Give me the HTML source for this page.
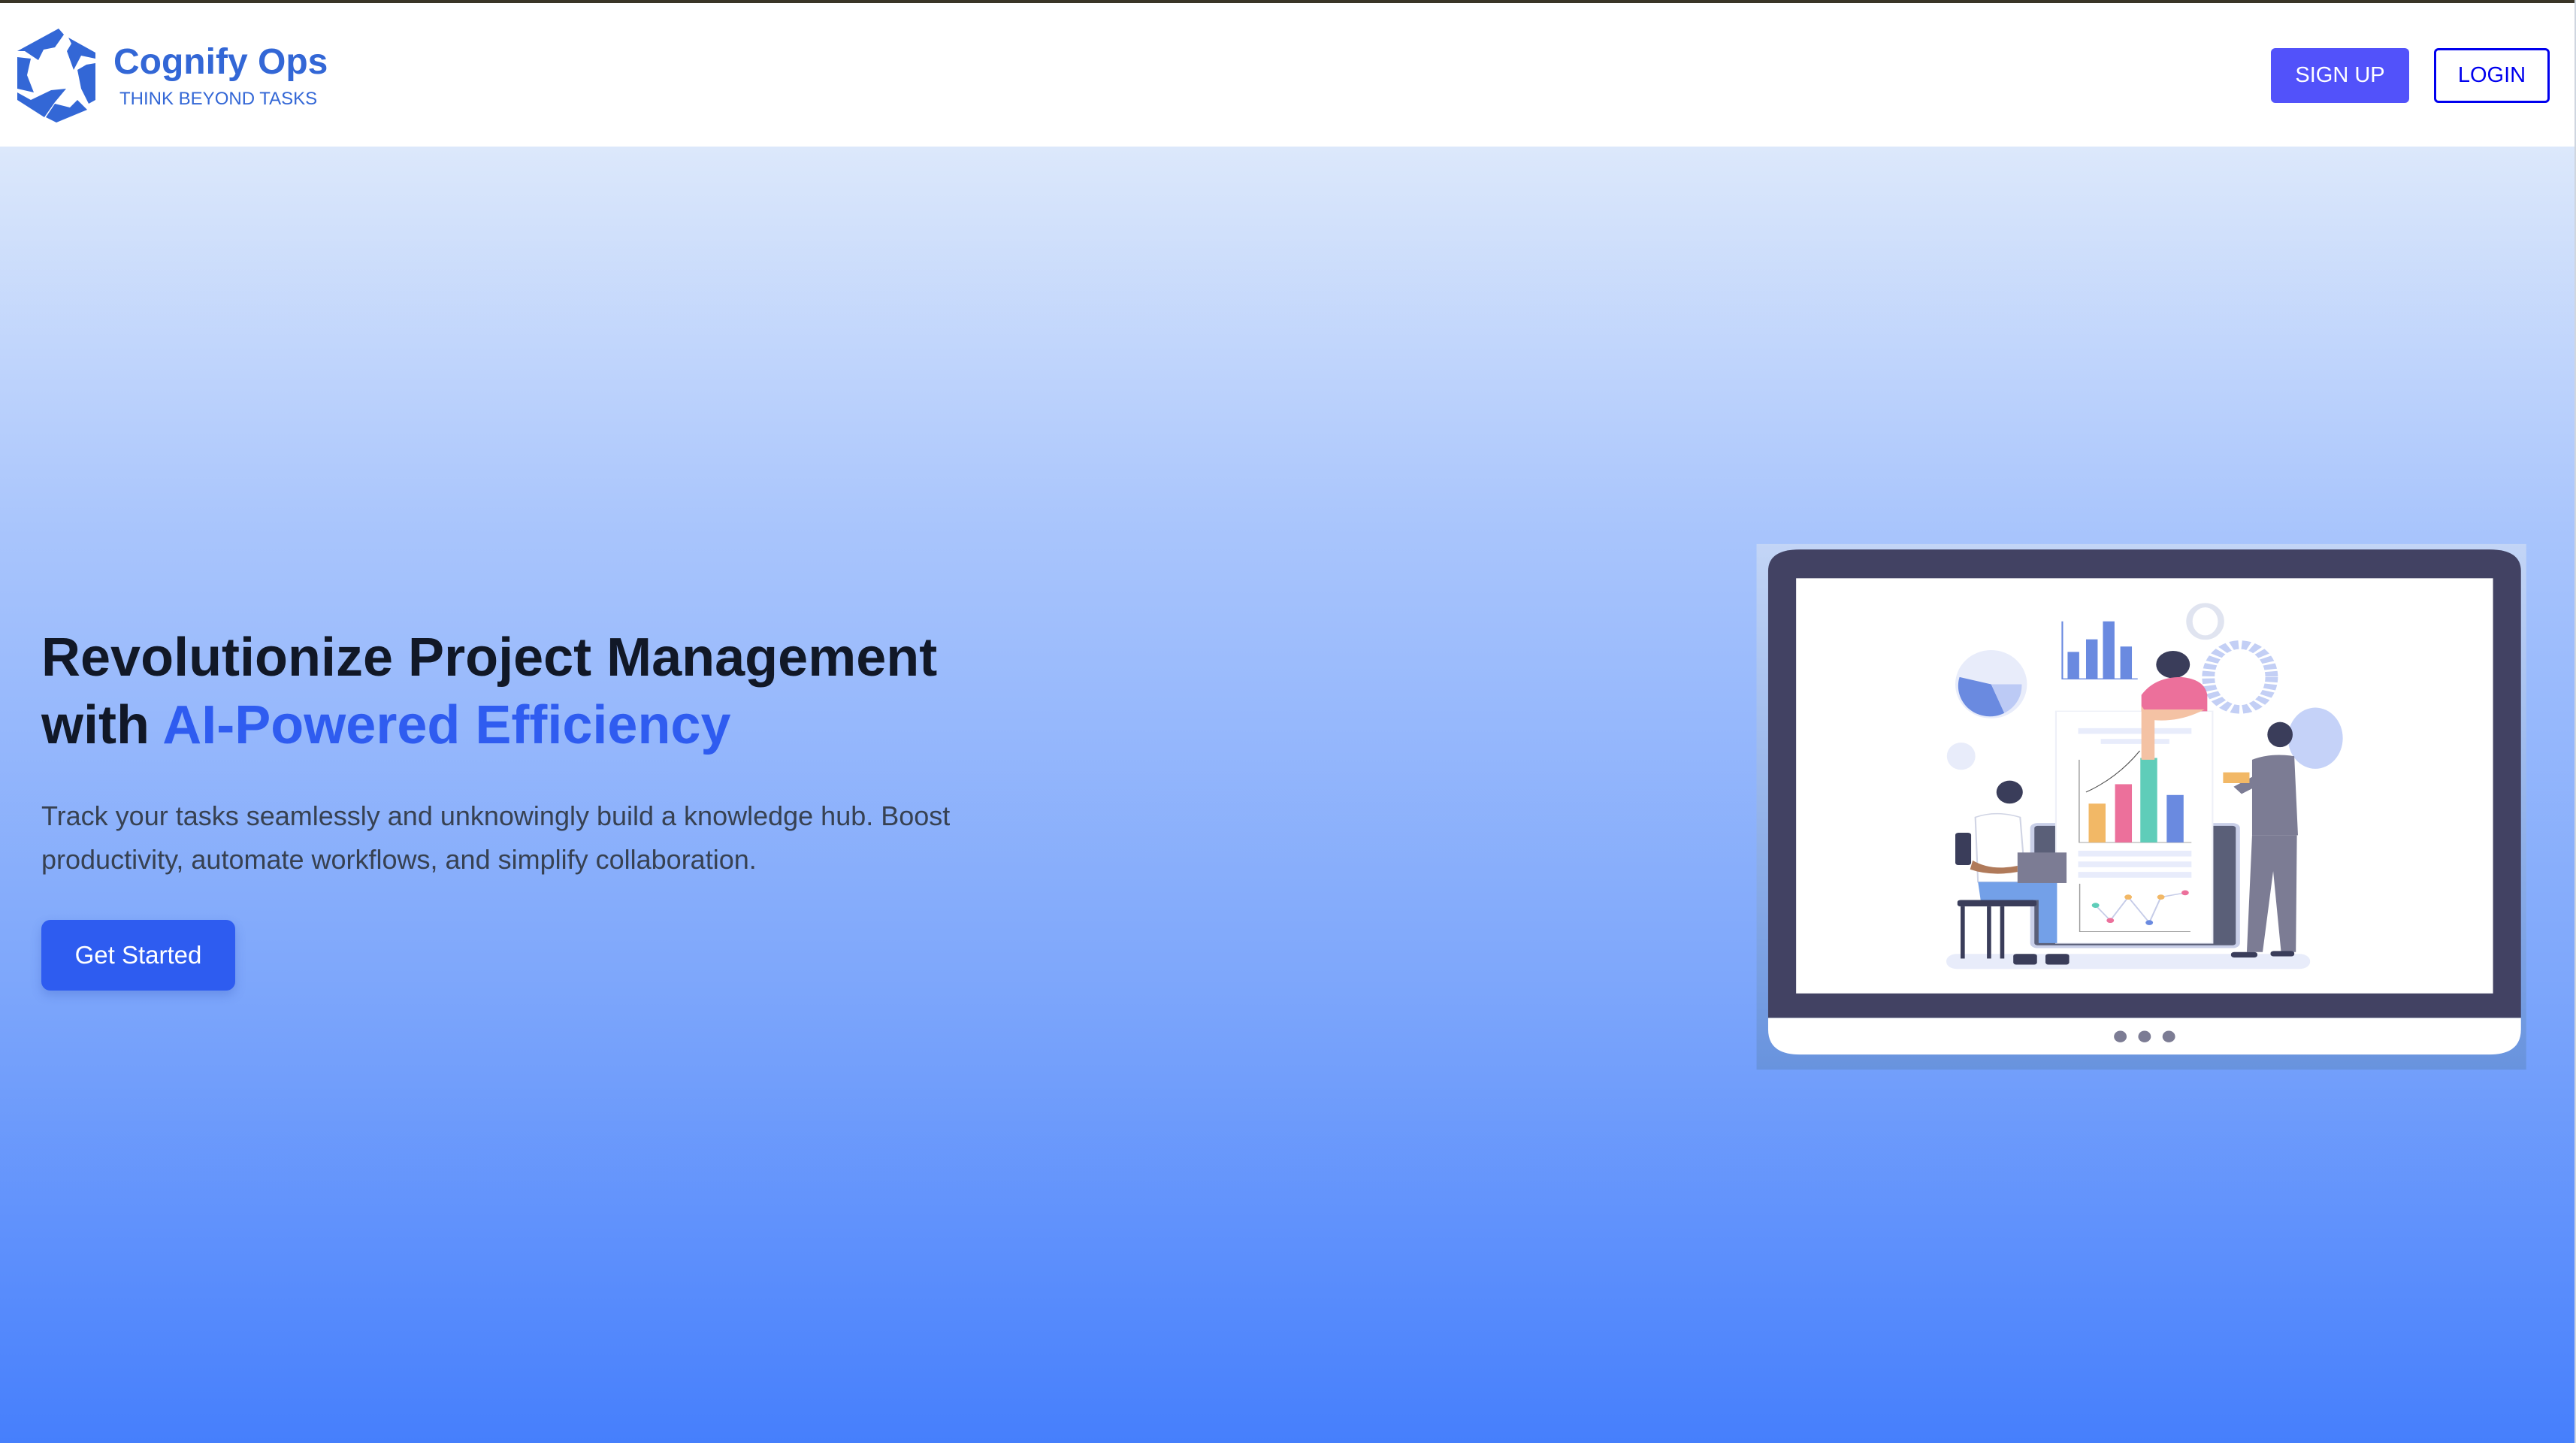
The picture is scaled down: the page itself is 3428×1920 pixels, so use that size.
<!DOCTYPE html>
<html><head><meta charset="utf-8"><style>
*{margin:0;padding:0;box-sizing:border-box}
html,body{width:3428px;height:1920px;overflow:hidden;font-family:"Liberation Sans",Arial,sans-serif}
body{background:linear-gradient(180deg,#dce8fb 195px,#a9c5fc 700px,#7ea7fb 1300px,#467ffc 1920px);position:relative}
.top{position:absolute;left:0;top:0;width:3428px;height:4px;background:#3a3528}
.hdr{position:absolute;left:0;top:4px;width:3426px;height:191px;background:#fff}
.rs{position:absolute;right:0;top:0;width:2px;height:1920px;background:#cfd6e0}
.brand{position:absolute;left:151px;top:55px;font-size:48px;font-weight:bold;color:#3367d6}
.tag{position:absolute;left:159px;top:118px;font-size:24px;color:#3367d6}
.btn{position:absolute;top:64px;height:73px;font-size:29px;display:flex;align-items:center;justify-content:center;border-radius:6px}
.su{left:3022px;width:184px;background:#5252fa;color:#fff}
.li{left:3239px;width:154px;border:3px solid #0000ee;color:#0000ee;background:#fff}
h1{position:absolute;left:55px;top:830px;font-size:72px;line-height:90px;color:#111827;font-weight:bold;white-space:nowrap}
h1 span{color:#2f5cf0}
p{position:absolute;left:55px;top:1057px;font-size:36px;line-height:58px;color:#374151;width:1300px}
.gs{position:absolute;left:55px;top:1224px;width:258px;height:94px;background:#2e5cf0;color:#fff;font-size:33px;border-radius:12px;display:flex;align-items:center;justify-content:center;box-shadow:0 6px 14px rgba(40,70,180,.25)}
svg.ill{position:absolute;left:2320px;top:700px;width:1100px;height:750px}
</style></head><body>
<div class="hdr"></div><div class="top"></div><div class="rs"></div>
<svg style="position:absolute;left:23px;top:38px" width="104" height="125" viewBox="0 0 104 125">
<g fill="#3367d6">
<polygon points="0,30 55,0 62,8 50,25 35,28 28,42 10,30"/>
<polygon points="68,12 104,32 104,40 85,36 75,55 66,30 72,20"/>
<polygon points="104,46 104,95 95,100 85,80 80,55 92,48"/>
<polygon points="93,108 52,125 38,118 50,100 70,105 80,95"/>
<polygon points="36,118 0,95 0,85 18,95 45,82 65,80 50,98"/>
<polygon points="0,80 0,38 18,40 13,62 22,85"/>
</g></svg>
<div class="brand">Cognify Ops</div>
<div class="tag">THINK BEYOND TASKS</div>
<div class="btn su">SIGN UP</div>
<div class="btn li">LOGIN</div>
<h1>Revolutionize Project Management<br>with <span>AI-Powered Efficiency</span></h1>
<p>Track your tasks seamlessly and unknowingly build a knowledge hub. Boost productivity, automate workflows, and simplify collaboration.</p>
<div class="gs">Get Started</div>
<svg class="ill" viewBox="0 0 1568 1568" preserveAspectRatio="none">
<defs><linearGradient id="bg" x1="0" y1="0" x2="0" y2="1"><stop offset="0" stop-color="#c3d5f6"/><stop offset="1" stop-color="#6893de"/></linearGradient></defs>
<rect x="25" y="50" width="1460" height="1462" fill="url(#bg)"/>
<path d="M107,65 H1415 Q1475,65 1475,125 V1368 H47 V125 Q47,65 107,65Z" fill="#424263"/>
<path d="M47,1368 H1475 V1400 Q1475,1470 1415,1470 H107 Q47,1470 47,1400Z" fill="#fff"/>
<rect x="100" y="145" width="1322" height="1155" fill="#fff"/>
<ellipse cx="715" cy="1420" rx="12" ry="16" fill="#7c7c94"/><ellipse cx="761" cy="1420" rx="12" ry="16" fill="#7c7c94"/><ellipse cx="807" cy="1420" rx="12" ry="16" fill="#7c7c94"/>
<rect x="385" y="1190" width="690" height="42" rx="20" fill="#e8ecfa"/>
<ellipse cx="470" cy="440" rx="68" ry="95" fill="#e8ecfa"/>
<path d="M470,440 L410,420 A60,85 0 0,0 495,520Z" fill="#6a8ae0"/>
<path d="M470,440 L495,520 A60,85 0 0,0 528,440Z" fill="#bccaf5"/>
<ellipse cx="413" cy="640" rx="27" ry="38" fill="#e8ecfa"/>
<ellipse cx="1085" cy="590" rx="52" ry="85" fill="#c5d2f8"/>
<ellipse cx="876" cy="265" rx="30" ry="45" fill="none" stroke="#e0e4f0" stroke-width="12"/>
<ellipse cx="942" cy="420" rx="60" ry="90" fill="none" stroke="#c3cff5" stroke-width="24" stroke-dasharray="14 6"/>
<path d="M605,265 V425 H748" fill="none" stroke="#6a8ae0" stroke-width="3"/>
<rect x="615" y="350" width="22" height="75" fill="#6a8ae0"/><rect x="650" y="315" width="22" height="110" fill="#6a8ae0"/><rect x="682" y="265" width="22" height="160" fill="#6a8ae0"/><rect x="715" y="335" width="22" height="90" fill="#6a8ae0"/>
<rect x="548" y="830" width="390" height="340" rx="10" fill="#5a5f78" stroke="#c9cfe8" stroke-width="8"/>
<rect x="593" y="515" width="297" height="645" fill="#fff" stroke="#eef0f8" stroke-width="3"/>
<rect x="635" y="562" width="215" height="16" fill="#e8ecfb"/><rect x="678" y="592" width="130" height="14" fill="#e8ecfb"/>
<path d="M637,650 V880 H850" fill="none" stroke="#999" stroke-width="2"/>
<path d="M650,740 Q710,700 752,625" fill="none" stroke="#555" stroke-width="2"/>
<rect x="655" y="772" width="32" height="108" fill="#f2b866"/><rect x="705" y="718" width="32" height="162" fill="#ec709b"/><rect x="753" y="645" width="32" height="235" fill="#5fcdb9"/><rect x="803" y="748" width="32" height="132" fill="#6a8ae0"/>
<rect x="635" y="903" width="215" height="16" fill="#e8ecfb"/><rect x="635" y="933" width="215" height="16" fill="#e8ecfb"/><rect x="635" y="962" width="215" height="16" fill="#e8ecfb"/>
<path d="M638,995 V1128 H848" fill="none" stroke="#999" stroke-width="2"/>
<polyline points="668,1055 696,1097 730,1032 770,1103 792,1032 838,1020" fill="none" stroke="#c6cce8" stroke-width="3"/>
<circle cx="668" cy="1055" r="7" fill="#5fcdb9"/><circle cx="696" cy="1097" r="7" fill="#ec709b"/><circle cx="730" cy="1032" r="7" fill="#f2b866"/><circle cx="770" cy="1103" r="7" fill="#6a8ae0"/><circle cx="792" cy="1032" r="7" fill="#f2b866"/><circle cx="838" cy="1020" r="7" fill="#ec709b"/>
<ellipse cx="815" cy="385" rx="32" ry="38" fill="#3a3d5a"/>
<path d="M755,470 Q780,420 830,420 Q875,425 880,470 V515 H755Z" fill="#ec709b"/>
<path d="M755,500 V650 H780 V540 Q830,545 875,510 H760Z" fill="#f4c2a4"/>
<ellipse cx="1018" cy="580" rx="24" ry="35" fill="#3a3d5a"/>
<path d="M965,650 Q1000,630 1045,640 L1052,860 H965Z" fill="#7c7c94"/>
<path d="M965,860 H1050 L1048,1185 H1020 L1005,960 L985,1185 H955Z" fill="#7c7c94"/>
<path d="M930,725 L975,690 L985,715 L945,745Z" fill="#7c7c94"/>
<rect x="910" y="685" width="50" height="30" fill="#f2b866"/>
<rect x="925" y="1185" width="50" height="15" rx="6" fill="#3a3d5a"/><rect x="1000" y="1182" width="45" height="15" rx="6" fill="#3a3d5a"/>
<rect x="402" y="853" width="30" height="90" rx="6" fill="#3a3d5a"/>
<rect x="406" y="1040" width="150" height="18" rx="6" fill="#3a3d5a"/>
<rect x="412" y="1058" width="8" height="145" fill="#3a3d5a"/><rect x="462" y="1058" width="8" height="145" fill="#3a3d5a"/><rect x="487" y="1058" width="8" height="145" fill="#3a3d5a"/>
<ellipse cx="505" cy="740" rx="25" ry="32" fill="#3a3d5a"/>
<path d="M440,810 Q480,790 525,810 L535,990 H445Z" fill="#fff" stroke="#d0d4e4" stroke-width="3"/>
<path d="M445,990 H595 V1160 H560 V1040 H450Z" fill="#73a0e8"/>
<rect x="520" y="908" width="93" height="85" fill="#7c7c94"/>
<path d="M435,930 Q470,960 520,945 V962 Q470,975 430,955Z" fill="#b07a5a"/>
<rect x="512" y="1190" width="45" height="30" rx="6" fill="#3a3d5a"/><rect x="573" y="1190" width="45" height="30" rx="6" fill="#3a3d5a"/>
</svg>
</body></html>
